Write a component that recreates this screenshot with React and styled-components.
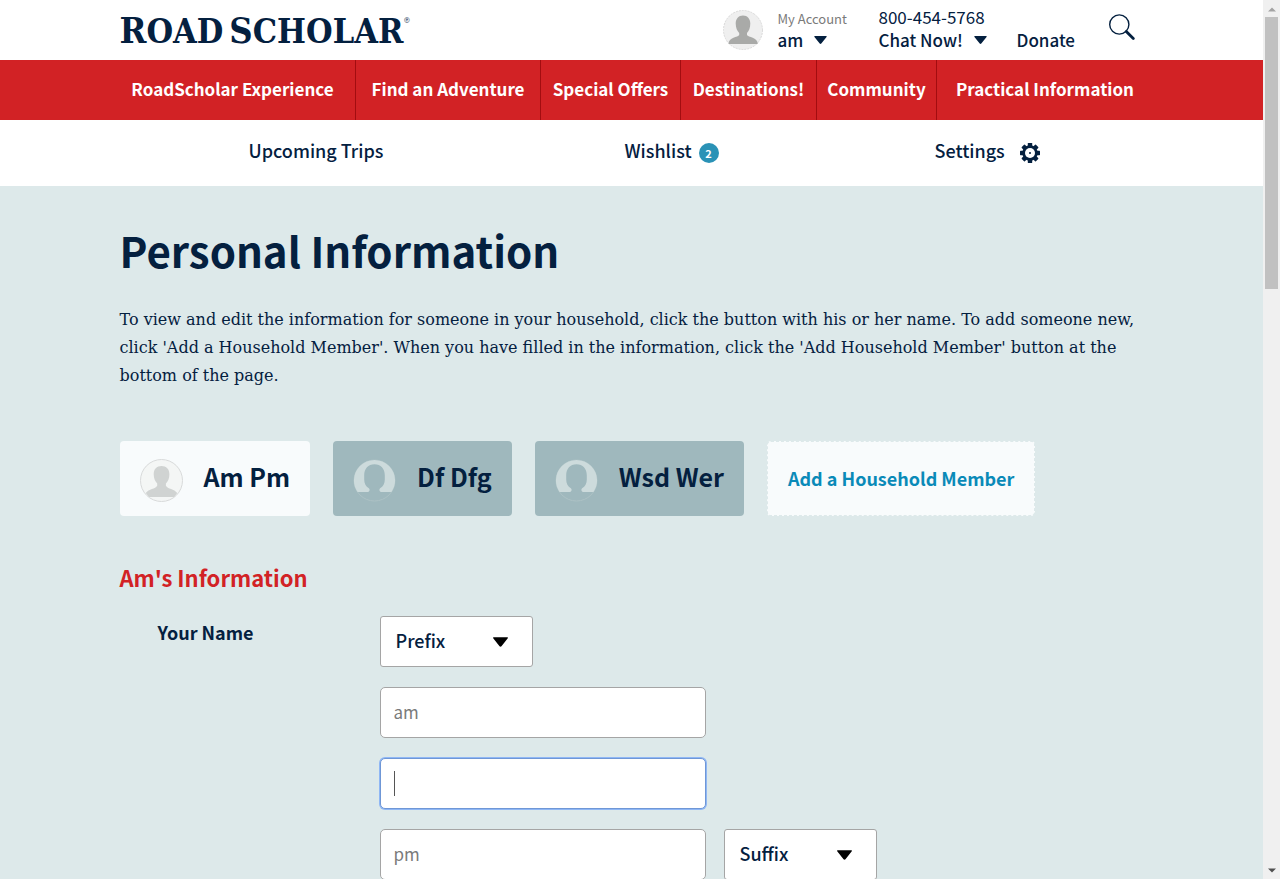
import React from "react";
import styled, { createGlobalStyle } from "styled-components";

const navy = "#04203f";
const red = "#d22225";
const sans = `"Noto Sans CJK SC", "Open Sans", sans-serif`;

const GlobalStyle = createGlobalStyle`
  *, *::before, *::after { box-sizing: border-box; }
  body { margin: 0; color: ${navy}; background: #fff; font-family: ${sans}; }
  a { color: inherit; text-decoration: none; }
  button, input, select { font: inherit; color: inherit; margin: 0; }
`;

const Shell = styled.div`
  display: grid;
  grid-template-columns: minmax(0, 1fr) 17px;
  height: 100vh;
`;

const Page = styled.div`
  overflow: hidden auto;
  scrollbar-width: none;
  background: #dde9ea;
`;

const Track = styled.div`
  display: flex;
  flex-direction: column;
  align-items: center;
  padding: 7px 2px 6px;
  background: #f0f0f0;
`;

const Thumb = styled.div`
  width: 13px;
  height: 31vh;
  margin: 5px 0 auto;
  background: #c1c1c1;
`;

const Header = styled.header`
  background: #fff;
`;

const HeaderInner = styled.div`
  display: flex;
  max-width: 1024px;
  height: 60px;
  margin: 0 auto;
`;

const Logo = styled.a`
  display: flex;
  align-items: baseline;
  gap: 6px;
  margin-right: auto;
  font-family: "DejaVu Serif Condensed", "DejaVu Serif", serif;
  font-stretch: condensed;
  font-size: 34px;
  font-weight: 700;
  line-height: 60px;
`;

const LogoInitial = styled.span`
  font-size: 36px;
`;

const LogoMark = styled.sup`
  font-size: 8px;
  font-weight: 400;
  line-height: 8px;
  vertical-align: 20px;
`;

const Account = styled.div`
  display: flex;
  width: 156px;
  gap: 15px;
  padding-top: 10px;
`;

const Stack = styled.div`
  display: flex;
  flex-direction: column;
  align-items: flex-start;
`;

const SmallNote = styled.span`
  font-size: 13px;
  line-height: 18px;
  color: #7a7a7a;
`;

const Phone = styled.a`
  margin-bottom: 2px;
  font-size: 17px;
  line-height: 18px;
`;

const HeaderAction = styled.button`
  display: flex;
  align-items: center;
  gap: 11px;
  padding: 0;
  border: 0;
  background: none;
  font-size: 17px;
  font-weight: 500;
  line-height: 24px;
`;

const Contact = styled(Stack)`
  width: 138px;
  padding-top: 8px;
`;

const Donate = styled.a`
  width: 92px;
  padding-top: 28px;
  font-size: 17px;
  font-weight: 500;
  line-height: 24px;
`;

const SearchButton = styled.button`
  display: flex;
  width: 35px;
  padding: 14px 0 0;
  border: 0;
  background: none;
`;

const MainNav = styled.nav`
  background: ${red};
`;

const MainNavList = styled.div`
  display: grid;
  grid-template-columns: 246fr 185fr 140fr 136fr 120fr 216fr;
  max-width: 1043px;
  margin: 0 auto;
`;

const MainNavLink = styled.a`
  padding-bottom: 2px;
  border-right: 1px solid #a30d10;
  color: #fff;
  font-size: 17px;
  font-weight: 700;
  line-height: 58px;
  text-align: center;
  white-space: nowrap;
  &:last-child { border-right: 0; }
`;

const SubNav = styled.nav`
  background: #fff;
`;

const SubNavList = styled.div`
  display: grid;
  grid-template-columns: 376fr 310fr 209fr;
  max-width: 1024px;
  height: 66px;
  margin: 0 auto;
  padding: 0 0 0 129px;
`;

const SubNavLink = styled.a`
  display: flex;
  align-items: center;
  gap: ${(p) => p.$gap || 0}px;
  font-size: 18px;
  font-weight: 500;
`;

const SubNavText = styled.span`
  padding-bottom: 6px;
`;

const Badge = styled.span`
  display: grid;
  place-items: center;
  width: 20px;
  height: 20px;
  border-radius: 50%;
  background: #2a92b6;
  color: #fff;
  font-size: 11px;
  font-weight: 700;
  line-height: 20px;
`;

const Main = styled.main`
  max-width: 1024px;
  margin: 0 auto;
  padding-top: 34px;
`;

const Title = styled.h1`
  margin: 0;
  font-size: 42px;
  font-weight: 700;
  line-height: 60px;
`;

const Intro = styled.p`
  margin: 26px 0 51px;
  font-family: "DejaVu Serif", serif;
  font-size: 16px;
  line-height: 28px;
`;

const People = styled.div`
  display: flex;
  flex-wrap: wrap;
  gap: 23px;
`;

const Person = styled.button`
  display: flex;
  align-items: center;
  gap: 21px;
  height: 75px;
  padding: 3px 20px 0;
  border: 0;
  border-radius: 4px;
  background: ${(p) => (p.$active ? "#f8fbfc" : "#9fb8bd")};
  font-size: 25px;
  font-weight: 700;
  white-space: nowrap;
`;

const PersonName = styled.span`
  padding-bottom: 8px;
`;

const AddPerson = styled.button`
  height: 75px;
  padding: 0 20px 2px;
  border: 1px dashed #dde9ea;
  border-radius: 4px;
  background: #f8fbfc;
  color: #0a8ab8;
  font-size: 18px;
  font-weight: 700;
  white-space: nowrap;
`;

const SectionTitle = styled.h2`
  margin: 45px 0 22px;
  color: ${red};
  font-size: 22px;
  font-weight: 700;
  line-height: 33px;
`;

const NameGroup = styled.fieldset`
  display: grid;
  grid-template-columns: 222px 1fr;
  margin: 0;
  padding: 0 0 40px 38px;
  border: 0;
`;

const GroupLabel = styled.div`
  font-size: 18px;
  font-weight: 700;
  line-height: 32px;
`;

const Fields = styled.div`
  display: flex;
  flex-direction: column;
  gap: 20px;
`;

const FieldRow = styled.div`
  display: flex;
  gap: 18px;
`;

const TextInput = styled.input`
  width: 326px;
  height: 51px;
  padding: 0 13px 3px;
  border: 1px solid #a5a5a5;
  border-radius: 5px;
  background: #fff;
  font-size: 17px;
  outline: 0;
  &::placeholder { color: #7a7a7a; opacity: 1; }
`;

const ActiveInput = styled(TextInput)`
  border-color: #6f97d6;
  box-shadow: 0 0 0 1px #8fb7f5;
  caret-color: transparent;
  background: #fff linear-gradient(#555, #555) 13px 50% / 1px 25px no-repeat;
`;

const SelectBox = styled.div`
  display: grid;
  align-items: center;
  width: 153px;
  height: 51px;
  > * { grid-area: 1 / 1; }
  > svg { justify-self: end; margin-right: 25px; pointer-events: none; }
`;

const Select = styled.select`
  appearance: none;
  width: 100%;
  height: 100%;
  padding: 0 15px 4px;
  border: 1px solid #a5a5a5;
  border-radius: 3px;
  background: #fff;
  font-size: 18px;
  font-weight: 500;
`;

function Caret({ size = 13, color = navy }) {
  return (
    <svg width={size} height={Math.round(size * 0.65)} viewBox="0 0 14 9" aria-hidden="true">
      <path d="M.6 0h12.8c.6 0 .8.6.4 1L7.9 8.5c-.5.6-1.3.6-1.8 0L.2 1c-.4-.4-.2-1 .4-1z" fill={color} />
    </svg>
  );
}

function AccountAvatar() {
  return (
    <svg width="40" height="40" viewBox="0 0 40 40" aria-hidden="true">
      <circle cx="20" cy="20" r="19.5" fill="#efefef" stroke="#d9d9d9" strokeDasharray="2 1" />
      <path d="M20 5.5c4.500 0 7.300 3.300 7.300 8 0 4.300-1.400 7.600-3.300 9.500v2c1 2.300 10.800 2.400 10.800 8.900H5.500c0-6.500 9.700-6.600 10.700-8.900v-2c-2-1.900-3.500-5.200-3.500-9.500 0-4.700 2.800-8 7.300-8z" fill="#a9aaa8" />
    </svg>
  );
}

function ActiveAvatar() {
  return (
    <svg width="43" height="43" viewBox="0 0 43 43" aria-hidden="true">
      <circle cx="21.500" cy="21.500" r="21" fill="#f4f6f5" stroke="#d8dada" />
      <path d="M21.500 7c4.800 0 7.900 3 7.900 8.300 0 4.200-1.500 7.200-3.500 9.200v2.300c1.600 3.200 8.500 3.200 11.300 7.200l-3 4H9l-3.200-4c2.800-4 9.800-4 11.400-7.200v-2.300c-2-2-3.500-5-3.500-9.200C13.700 10 16.700 7 21.500 7z" fill="#d0d3d2" />
    </svg>
  );
}

function MutedAvatar() {
  return (
    <svg width="43" height="43" viewBox="0 0 43 43" aria-hidden="true">
      <circle cx="21.500" cy="21.500" r="20.500" fill="none" stroke="#adc2c5" />
      <path d="M4.500 33C2.300 29.500.9 26 .9 21.500a20.600 20.600 0 0 1 41.200 0c0 4.500-1.400 8-3.600 11.500H27.800c-1.500-.7-2-2.400-.7-3.700 3.100-1.800 4.700-5 4.700-8.800v-4c0-6.800-4-11.200-10.300-11.200S11.200 9.700 11.200 16.500v4c0 3.800 1.600 7 4.700 8.800 1.300 1.300.8 3-.7 3.700z" fill="#cddbdc" />
    </svg>
  );
}

function SearchIcon() {
  return (
    <svg width="26" height="26" viewBox="0 0 26 26" aria-hidden="true">
      <circle cx="10.300" cy="10.500" r="9.600" fill="none" stroke={navy} strokeWidth="1.400" />
      <path d="M17.300 17.500l7 7" stroke={navy} strokeWidth="2.800" strokeLinecap="round" />
    </svg>
  );
}

function GearIcon() {
  return (
    <svg width="20" height="20" viewBox="0 0 20 20" aria-hidden="true">
      <g fill={navy}>
        {[0, 45, 90, 135].map((a) => (
          <rect key={a} x="7.800" y="0" width="4.400" height="20" rx=".6" transform={`rotate(${a} 10 10)`} />
        ))}
        <circle cx="10" cy="10" r="7.700" />
      </g>
      <circle cx="10" cy="10" r="5" fill="#fff" />
      <circle cx="10" cy="10" r="1" fill={navy} />
    </svg>
  );
}

function ScrollArrow({ down }) {
  return (
    <svg width="8" height="5" viewBox="0 0 8 5" aria-hidden="true">
      <path d={down ? "M0 .5h8L4 4.500z" : "M0 4.500h8L4 .5z"} fill={down ? "#505050" : "#a3a3a3"} />
    </svg>
  );
}

const navItems = [
  "RoadScholar Experience",
  "Find an Adventure",
  "Special Offers",
  "Destinations!",
  "Community",
  "Practical Information",
];

function Dropdown({ label }) {
  return (
    <SelectBox>
      <Select aria-label={label} defaultValue={label}>
        <option>{label}</option>
      </Select>
      <Caret size={15} color="#000" />
    </SelectBox>
  );
}

export default function App() {
  return (
    <Shell>
      <GlobalStyle />
      <Page>
        <Header>
          <HeaderInner>
            <Logo href="#">
              <span><LogoInitial>R</LogoInitial>OAD</span>{" "}
              <span><LogoInitial>S</LogoInitial>CHOLAR<LogoMark>®</LogoMark></span>
            </Logo>
            <Account>
              <AccountAvatar />
              <Stack>
                <SmallNote>My Account</SmallNote>
                <HeaderAction>am <Caret /></HeaderAction>
              </Stack>
            </Account>
            <Contact>
              <Phone href="tel:8004545768">800-454-5768</Phone>
              <HeaderAction>Chat Now! <Caret /></HeaderAction>
            </Contact>
            <Donate href="#">Donate</Donate>
            <SearchButton aria-label="Search"><SearchIcon /></SearchButton>
          </HeaderInner>
        </Header>
        <MainNav>
          <MainNavList>
            {navItems.map((item) => (
              <MainNavLink href="#" key={item}>{item}</MainNavLink>
            ))}
          </MainNavList>
        </MainNav>
        <SubNav>
          <SubNavList>
            <SubNavLink href="#"><SubNavText>Upcoming Trips</SubNavText></SubNavLink>
            <SubNavLink href="#" $gap={7}><SubNavText>Wishlist</SubNavText><Badge>2</Badge></SubNavLink>
            <SubNavLink href="#" $gap={15}><SubNavText>Settings</SubNavText><GearIcon /></SubNavLink>
          </SubNavList>
        </SubNav>
        <Main>
          <Title>Personal Information</Title>
          <Intro>
            To view and edit the information for someone in your household, click the button with his or her name. To add someone new, click 'Add a Household Member'. When you have filled in the information, click the 'Add Household Member' button at the bottom of the page.
          </Intro>
          <People>
            <Person $active><ActiveAvatar /><PersonName>Am Pm</PersonName></Person>
            <Person><MutedAvatar /><PersonName>Df Dfg</PersonName></Person>
            <Person><MutedAvatar /><PersonName>Wsd Wer</PersonName></Person>
            <AddPerson>Add a Household Member</AddPerson>
          </People>
          <SectionTitle>Am's Information</SectionTitle>
          <NameGroup aria-labelledby="name-label">
            <GroupLabel id="name-label">Your Name</GroupLabel>
            <Fields>
              <FieldRow><Dropdown label="Prefix" /></FieldRow>
              <FieldRow><TextInput aria-label="First name" placeholder="am" /></FieldRow>
              <FieldRow><ActiveInput aria-label="Middle name" /></FieldRow>
              <FieldRow>
                <TextInput aria-label="Last name" placeholder="pm" />
                <Dropdown label="Suffix" />
              </FieldRow>
            </Fields>
          </NameGroup>
        </Main>
      </Page>
      <Track aria-hidden="true">
        <ScrollArrow />
        <Thumb />
        <ScrollArrow down />
      </Track>
    </Shell>
  );
}
